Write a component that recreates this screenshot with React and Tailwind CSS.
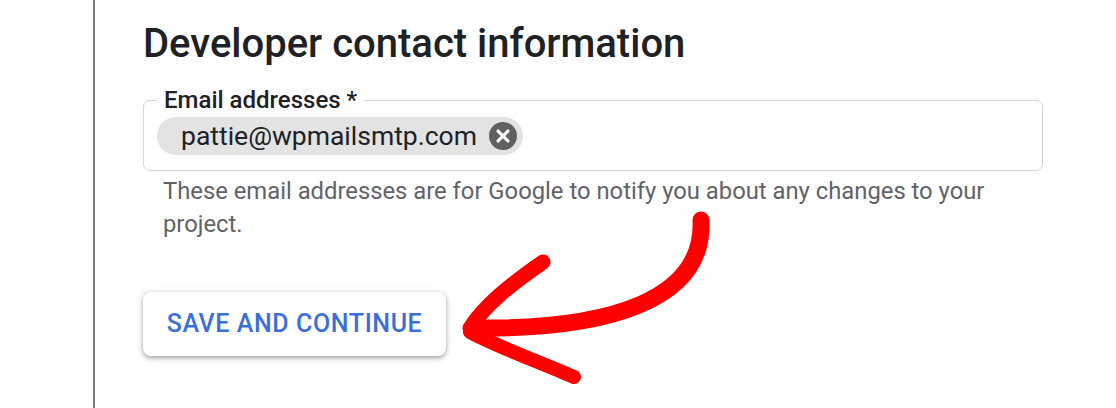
import React from "react";

export default function App() {
  return (
    <div className="relative w-[1116px] h-[408px] bg-white overflow-hidden" style={{ fontFamily: "Roboto, 'Liberation Sans', sans-serif" }}>
      <div className="flex h-full pl-[93px]">
        <div className="h-full border-l-2 border-[#7a7a7a] pl-[48px] pt-[20px] w-[952px]">
          <h1 className="text-[40px] leading-[48px] text-[#202124] font-medium">Developer contact information</h1>
          <fieldset className="mt-[18px] border border-[#d6d6d6] rounded-[7px] pl-[13px] pr-[12px] pb-[15px] w-[900px]">
            <legend className="px-[7px] text-[24px] leading-[28px] font-medium text-[#202124]">Email addresses *</legend>
            <div className="mt-[3px] flex">
              <div className="flex items-center h-[38px] rounded-full bg-[#e3e3e3] pl-[24px] pr-[6px]">
                <span className="text-[26.5px] text-[#202124] leading-none">pattie@wpmailsmtp.com</span>
                <svg className="ml-[12px]" width="28" height="28" viewBox="0 0 24 24">
                  <circle cx="12" cy="12" r="12" fill="#606060" />
                  <path d="M7.8 7.8 L16.2 16.2 M16.2 7.8 L7.8 16.2" stroke="#fff" strokeWidth="2.8" strokeLinecap="round" />
                </svg>
              </div>
            </div>
          </fieldset>
          <p className="mt-[4px] pl-[20px] w-[880px] text-[23.8px] leading-[33px] text-[#5f6368]">
            These email addresses are for Google to notify you about any changes to your project.
          </p>
          <button className="mt-[51px] w-[303px] h-[64px] rounded-[8px] bg-white shadow-[0_2px_4px_rgba(0,0,0,0.3),0_1px_8px_rgba(0,0,0,0.12)] text-[25px] font-medium tracking-[0.6px] text-[#3b6fd8]">
            SAVE AND CONTINUE
          </button>
        </div>
      </div>
      <svg className="absolute left-0 top-0 pointer-events-none" width="1116" height="408" viewBox="0 0 1116 408">
        <g fill="none" stroke="#ff0000" strokeLinecap="round" strokeLinejoin="round">
          <path d="M701 220 C705 300, 610 330, 472 328" strokeWidth="17" />
          <path d="M543 262 C510 285, 485 305, 470 328" strokeWidth="15" />
          <path d="M470 332 C500 348, 540 362, 574 377" strokeWidth="14" />
        </g>
      </svg>
    </div>
  );
}
